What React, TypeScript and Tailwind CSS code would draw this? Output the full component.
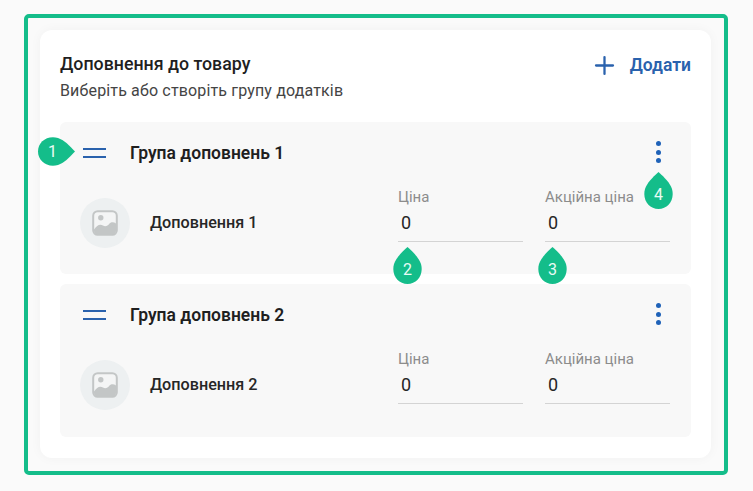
import {Plus} from 'lucide-react';

interface BadgeProps {
  label: string;
  className: string;
  right?: boolean;
}

// Green numbered drop, point up or to the right
function Badge({label, className, right}: BadgeProps) {
  return (
    <div className={`absolute flex items-center justify-center ${right ? "w-[37px] h-[29px]" : "w-[29px] h-[37px] pt-2"} ${className}`}>
      {right ? (
        <svg viewBox="0 0 37 29" className="absolute inset-0 w-[37px] h-[29px]">
          <path d="M37 14.5C31 8 26 3 20 1C9-2 0 5 0 14.5S9 31 20 28C26 26 31 21 37 14.5Z" fill="#14bd8a"/>
        </svg>
      ) : (
        <svg viewBox="0 0 29 37" className="absolute inset-0 w-[29px] h-[37px]">
          <path d="M14.5 0C8 6 3 11 1 17C-2 28 5 37 14.5 37S31 28 28 17C26 11 21 6 14.5 0Z" fill="#14bd8a"/>
        </svg>
      )}
      <span className={`relative text-[16px] leading-none text-[#e9fbf5] ${right ? "-ml-2" : ""}`}>{label}</span>
    </div>
  );
}

function ImagePlaceholder() {
  return (
    <div className="shrink-0 flex items-center justify-center size-[50px] rounded-full bg-[#edf0f1]">
      <svg viewBox="0 0 26 26" className="size-[26px]">
        <rect x="1.2" y="1.2" width="23.6" height="23.6" rx="4.5" fill="#f4f5f5" stroke="#c3c6c6" strokeWidth="2"/>
        <circle cx="8.8" cy="7.8" r="2.7" fill="#c3c6c6"/>
        <path d="M2 19.5C5 15 8 13.5 11 15.5C13.5 17 15.5 16 17.5 13.5C19.5 11.5 22 12 24 13.5V21C24 23.5 22.500 24.500 20.500 24.500H5.500C3.500 24.500 2 23 2 21Z" fill="#c3c6c6"/>
      </svg>
    </div>
  );
}

function PriceField({label}: {label: string}) {
  return (
    <div className="w-[125px]">
      <div className="text-[15px]/5 text-[#8c8c8c]">{label}</div>
      <div className="h-[35px] pt-[4px] pl-[3px] text-lg/6 text-[#262626] border-b border-[#d4d4d4]">0</div>
    </div>
  );
}

function Group({index, className}: {index: number; className?: string}) {
  return (
    <div className={`bg-[#f8f8f8] rounded-md pl-[20px] pr-[21px] ${className ?? ""}`}>
      <div className="flex items-center h-[60px]">
        <div className="w-[50px] mt-px">
          <div className="w-[23px] ml-[3px] h-[2px] bg-[#2a62ad] mb-[6px]"/>
          <div className="w-[23px] ml-[3px] h-[2px] bg-[#2a62ad]"/>
        </div>
        <div className="text-[17.5px] font-semibold text-[#1f1f1f] mt-0.5">Група доповнень {index}</div>
        <div className="ml-auto mr-[9px] flex flex-col gap-[3.5px]">
          <div className="size-[5px] rounded-full bg-[#1f62b8]"/>
          <div className="size-[5px] rounded-full bg-[#1f62b8]"/>
          <div className="size-[5px] rounded-full bg-[#1f62b8]"/>
        </div>
      </div>
      <div className="flex items-center h-[80px] pt-[2px]">
        <ImagePlaceholder/>
        <div className="ml-5 text-[16.2px] font-medium text-[#262626]">Доповнення {index}</div>
        <div className="ml-auto self-start mt-[3px] flex gap-[22px]">
          <PriceField label="Ціна"/>
          <PriceField label="Акційна ціна"/>
        </div>
      </div>
      {index === 2 && <div className="h-[13px]"/>}
      {index === 1 && <div className="h-3"/>}
    </div>
  );
}

export default function App() {
  return (
    <div className="w-[753px] h-[491px] overflow-hidden bg-[#fafafa] pt-[14px] pl-[24px] font-['Roboto',sans-serif]">
      <div className="relative w-[704px] h-[461px] border-4 border-[#14bd8a] rounded-[5px] px-3 pt-3">
        <div className="w-[671px] h-[428px] bg-white rounded-xl shadow-[0_0_12px_rgba(0,0,0,0.04)] px-5 pt-[22px]">
          <div className="flex items-start justify-between h-[70px]">
            <div>
              <div className="text-[17.8px]/6 font-medium text-[#1f1f1f]">Доповнення до товару</div>
              <div className="mt-[5px] text-base/5 tracking-[0.15px] text-[#444444]">Виберіть або створіть групу додатків</div>
            </div>
            <div className="flex items-center gap-[16px] h-[26px]">
              <Plus className="size-[29px] text-[#2a62ad] -my-2 -mx-[5px]" strokeWidth={1.9} absoluteStrokeWidth/>
              <span className="text-[17.5px] font-semibold text-[#2a62ad]">Додати</span>
            </div>
          </div>
          <Group index={1}/>
          <Group index={2} className="mt-[10px]"/>
        </div>
        <Badge label="1" right className="left-[10px] top-[119px]"/>
        <Badge label="2" className="left-[365px] top-[229px]"/>
        <Badge label="3" className="left-[510px] top-[229px]"/>
        <Badge label="4" className="left-[616px] top-[154px]"/>
      </div>
    </div>
  );
}
